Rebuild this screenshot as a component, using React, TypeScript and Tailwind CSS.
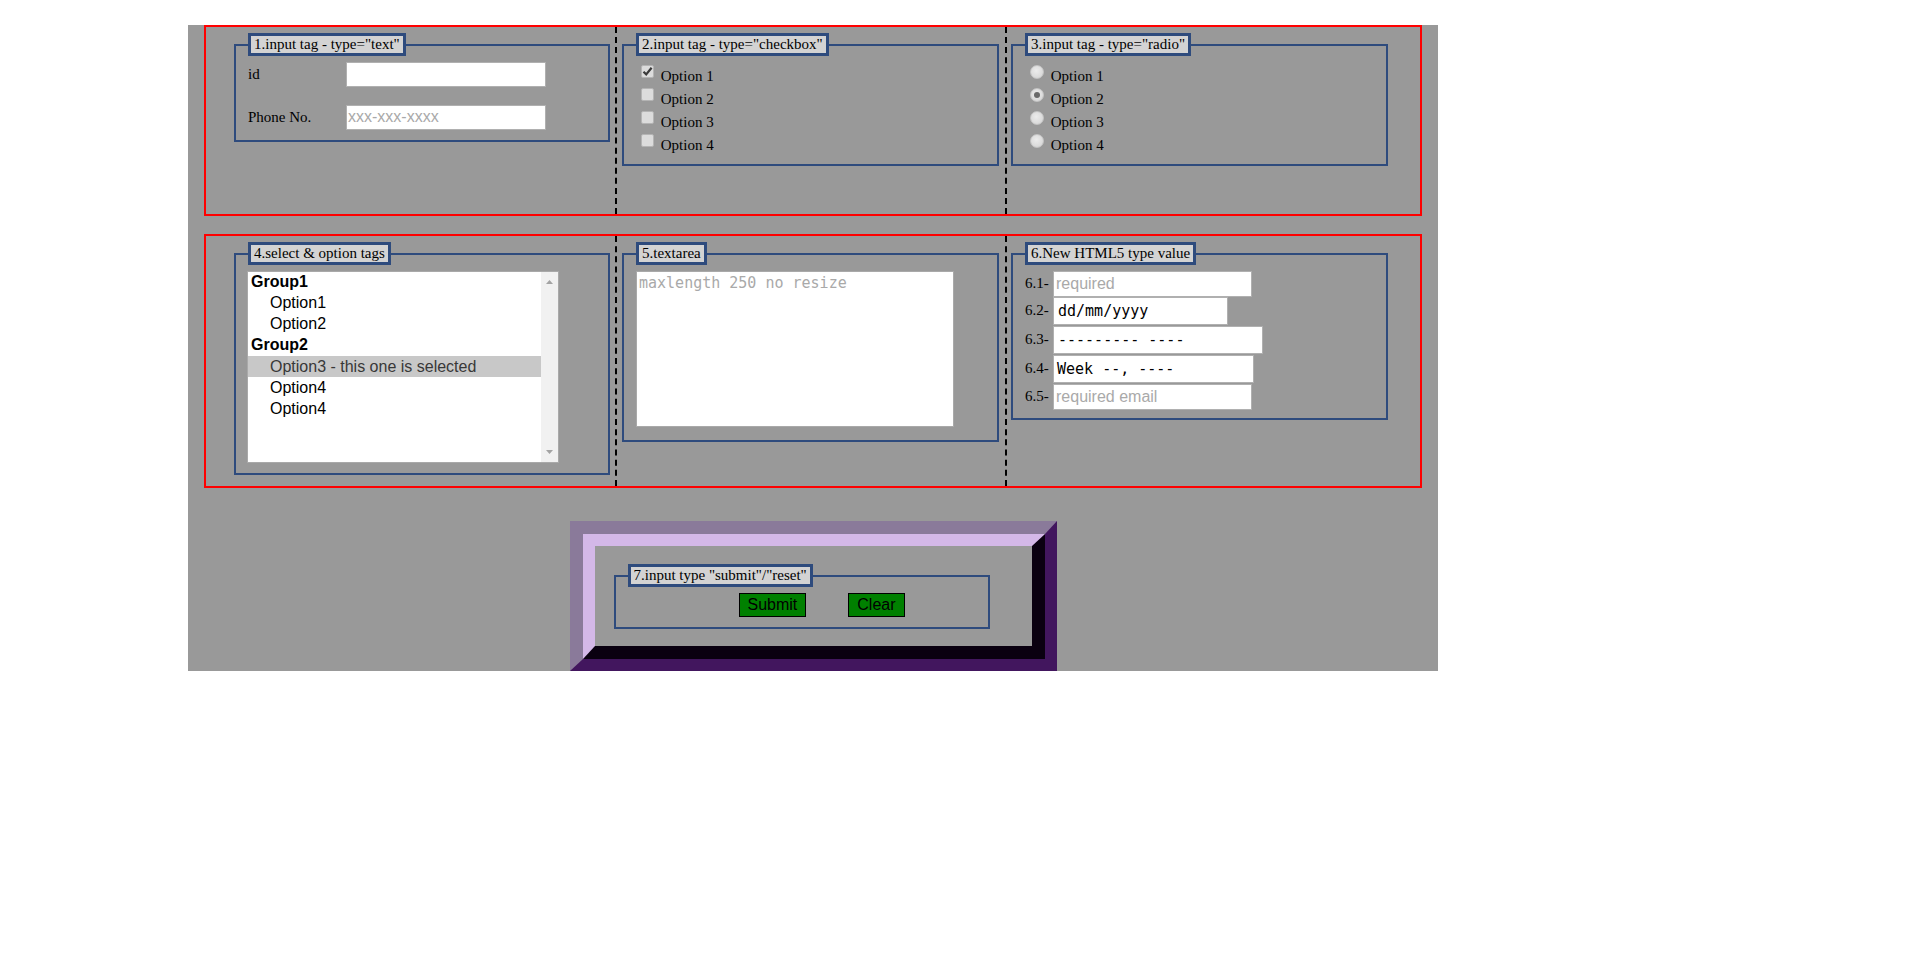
import type { ReactNode } from 'react';

const serif = "font-['Liberation_Serif',serif]";
const sans = "font-['Liberation_Sans',Arial,sans-serif]";
const mono = "font-['DejaVu_Sans_Mono',monospace]";

const Legend = ({ children }: { children: ReactNode }) => (
  <legend className="border-[3px] border-[#2e4b7d] bg-[#d3d3d3] px-[3px] leading-[17px] text-black">
    {children}
  </legend>
);

const Box = ({ title, w, children, pb = 'pb-[10px]' }: { title: string; w: string; children: ReactNode; pb?: string }) => (
  <fieldset className={`m-0 mt-[6px] self-start border-2 border-[#2e4b7d] px-3 pt-[5.6px] ${pb} min-w-0 ${w}`}>
    <Legend>{title}</Legend>
    {children}
  </fieldset>
);

const Check = ({ on }: { on?: boolean }) => (
  <span className="inline-block w-[13px] h-[13px] ml-[5px] mr-[3px] mt-[3px] mb-[3px] align-baseline rounded-[2px] border border-[#b4b4b4] bg-[#dcdcdc] relative">
    {on && (
      <svg viewBox="0 0 13 13" className="absolute -left-px -top-px w-[13px] h-[13px]">
        <path d="M2.5 6.8 L5.2 9.4 L10.6 2.8" fill="none" stroke="#3a3a3a" strokeWidth="2.2" />
      </svg>
    )}
  </span>
);

const Radio = ({ on }: { on?: boolean }) => (
  <span className="inline-block w-[14px] h-[14px] ml-[5px] mr-[3px] mt-[3px] mb-[2px] align-baseline rounded-full border border-[#c4c4c4] bg-[radial-gradient(circle_at_45%_40%,#ececec,#d2d2d2)] relative">
    {on && <span className="absolute left-[3px] top-[3px] w-[6px] h-[6px] rounded-full bg-[#6a6a6a]" />}
  </span>
);

const FakeInput = ({ w, h, children }: { w: string; h: string; children?: ReactNode }) => (
  <div className={`${w} ${h} border border-[#b0b0b0] bg-white flex items-center overflow-hidden whitespace-nowrap`}>
    {children}
  </div>
);

const Tri = ({ down }: { down?: boolean }) => (
  <svg width="7" height="4" viewBox="0 0 7 4" className="mx-auto">
    <path d={down ? 'M0 0 L7 0 L3.5 4 Z' : 'M0 4 L7 4 L3.5 0 Z'} fill="#a3a3a3" />
  </svg>
);

const Row = ({ children, height }: { children: ReactNode; height: string }) => (
  <div className={`mx-4 flex ${height} border-2 border-[#ff0000] pl-[28px]`}>
    {children}
  </div>
);

const options = [
  { label: 'Group1', group: true },
  { label: 'Option1' },
  { label: 'Option2' },
  { label: 'Group2', group: true },
  { label: 'Option3 - this one is selected', selected: true },
  { label: 'Option4' },
  { label: 'Option4' },
];

const App = () => {
  return (
    <div className={`min-h-screen bg-white pt-[25px] ${serif} text-[15px] leading-[normal] text-black`}>
      <div className="ml-[188px] w-[1250px] bg-[#999999]">
        <Row height="h-[191px]">
          <div className="mr-[5px]">
            <Box title={'1.input tag - type="text"'} w="w-[376px]">
              <div className="flex flex-col gap-[18px]">
                <div className="flex items-center">
                  <span className="w-[98px]">id</span>
                  <FakeInput w="w-[200px]" h="h-[25px]" />
                </div>
                <div className="flex items-center">
                  <span className="w-[98px]">Phone No.</span>
                  <FakeInput w="w-[200px]" h="h-[25px]">
                    <span className={`${sans} text-[16px] text-[#a9a9a9] pl-[1px]`}>xxx-xxx-xxxx</span>
                  </FakeInput>
                </div>
              </div>
            </Box>
          </div>
          <div className="flex border-x-2 border-dashed border-black pl-[5px] pr-[6px]">
            <Box title={'2.input tag - type="checkbox"'} w="w-[377px]">
              <div><Check on /> Option 1</div>
              <div><Check /> Option 2</div>
              <div><Check /> Option 3</div>
              <div><Check /> Option 4</div>
            </Box>
          </div>
          <div className="ml-[4px]">
            <Box title={'3.input tag - type="radio"'} w="w-[377px]">
              <div><Radio /> Option 1</div>
              <div><Radio on /> Option 2</div>
              <div><Radio /> Option 3</div>
              <div><Radio /> Option 4</div>
            </Box>
          </div>
        </Row>

        <div className="mt-[18px]">
          <Row height="h-[254px]">
            <div className="mr-[5px]">
              <Box title="4.select & option tags" w="w-[376px]">
                <div className={`-ml-px flex w-[312px] h-[192px] border border-[#a9a9a9] bg-white ${sans} text-[16px]`}>
                  <div className="flex-1 -mt-px">
                    {options.map((o, i) => (
                      <div
                        key={i}
                        className={`leading-[21.25px] whitespace-nowrap ${o.group ? 'pl-[3px] font-bold' : 'pl-[22px]'} ${o.selected ? 'bg-[#c8c8c8] text-[#383838]' : ''}`}
                      >
                        {o.label}
                      </div>
                    ))}
                  </div>
                  <div className="flex w-[17px] flex-col justify-between bg-[#f1f1f1] py-[8px]">
                    <Tri />
                    <Tri down />
                  </div>
                </div>
              </Box>
            </div>
            <div className="flex border-x-2 border-dashed border-black pl-[5px] pr-[6px]">
              <Box title="5.textarea" w="w-[377px]">
                <div className="mb-[3px] w-[318px] h-[156px] border border-[#a9a9a9] bg-white p-[2px]">
                  <span className={`${mono} text-[15px] text-[#a9a9a9]`}>maxlength 250 no resize</span>
                </div>
              </Box>
            </div>
            <div className="ml-[4px]">
              <Box title="6.New HTML5 type value" w="w-[377px]" pb="pb-[8px]">
                <div className="flex flex-col">
                  <div className="flex items-center">
                    <span className="w-[28px]">6.1-</span>
                    <FakeInput w="w-[199px]" h="h-[26px]">
                      <span className={`${sans} text-[16px] text-[#a9a9a9] pl-[2px]`}>required</span>
                    </FakeInput>
                  </div>
                  <div className="flex items-center">
                    <span className="w-[28px]">6.2-</span>
                    <FakeInput w="w-[175px]" h="h-[28px]">
                      <span className={`${mono} text-[15px] pl-[4px]`}>dd/mm/yyyy</span>
                    </FakeInput>
                  </div>
                  <div className="mt-px flex items-center">
                    <span className="w-[28px]">6.3-</span>
                    <FakeInput w="w-[210px]" h="h-[28px]">
                      <span className={`${mono} text-[15px] pl-[4px]`}>--------- ----</span>
                    </FakeInput>
                  </div>
                  <div className="mt-px flex items-center">
                    <span className="w-[28px]">6.4-</span>
                    <FakeInput w="w-[201px]" h="h-[28px]">
                      <span className={`${mono} text-[15px] pl-[3px]`}>Week --, ----</span>
                    </FakeInput>
                  </div>
                  <div className="mt-px flex items-center">
                    <span className="w-[28px]">6.5-</span>
                    <FakeInput w="w-[199px]" h="h-[26px]">
                      <span className={`${sans} text-[16px] text-[#a9a9a9] pl-[2px]`}>required email</span>
                    </FakeInput>
                  </div>
                </div>
              </Box>
            </div>
          </Row>
        </div>

        <div className="mx-auto mt-[33px] w-[487px] border-t-[13px] border-l-[13px] border-b-[12px] border-r-[12px] border-t-[#8a7a9a] border-l-[#8a7a9a] border-b-[#42165e] border-r-[#42165e]">
          <div className="h-[125px] border-t-[12px] border-l-[12px] border-b-[13px] border-r-[13px] border-t-[#d4b8e8] border-l-[#d4b8e8] border-b-[#0a0010] border-r-[#0a0010] pt-[12px] pl-[19px]">
            <Box title={'7.input type "submit"/"reset"'} w="w-[376px]">
              <div className={`flex pl-[111px] gap-[42px] ${sans} text-[16px]`}>
                <button type="submit" className="h-[24px] border border-black bg-[#008000] px-2 leading-none text-black">
                  Submit
                </button>
                <button type="reset" className="h-[24px] border border-black bg-[#008000] px-2 leading-none text-black">
                  Clear
                </button>
              </div>
            </Box>
          </div>
        </div>
      </div>
    </div>
  );
};

export default App;
